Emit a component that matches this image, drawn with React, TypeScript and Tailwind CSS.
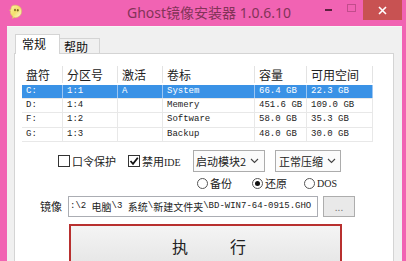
import React from "react";

const cols = [41, 55, 45, 92, 52, 66];
const headers = ["盘符", "分区号", "激活", "卷标", "容量", "可用空间"];
const rows = [
  { c: ["C:", "1:1", "A", "System", "66.4 GB", "22.3 GB"], sel: true, h: 14 },
  { c: ["D:", "1:4", "", "Memery", "451.6 GB", "109.0 GB"], sel: false, h: 14 },
  { c: ["F:", "1:2", "", "Software", "58.0 GB", "35.3 GB"], sel: false, h: 15 },
  { c: ["G:", "1:3", "", "Backup", "48.0 GB", "30.0 GB"], sel: false, h: 14 },
];

const pathParts: { t: string; cjk: boolean }[] = [
  { t: ":\\2 ", cjk: false },
  { t: "电脑", cjk: true },
  { t: "\\3 ", cjk: false },
  { t: "系统", cjk: true },
  { t: "\\", cjk: false },
  { t: "新建文件夹", cjk: true },
  { t: "\\BD-WIN7-64-0915.GHO", cjk: false },
];

function Chevron() {
  return (
    <svg width="9" height="6" viewBox="0 0 9 6" className="shrink-0">
      <path d="M1 1 L4.5 4.5 L8 1" fill="none" stroke="#444" strokeWidth="1.1" />
    </svg>
  );
}

function GhostIcon() {
  return (
    <svg width="14" height="15" viewBox="0 0 14 15">
      <defs>
        <linearGradient id="gg" x1="0" y1="0" x2="1" y2="1">
          <stop offset="0" stopColor="#fff6b0" />
          <stop offset="0.5" stopColor="#f3e06a" />
          <stop offset="1" stopColor="#fffbe6" />
        </linearGradient>
      </defs>
      <path
        d="M3 2 C5 0.5 9 1 11 3 C13 5 13 9 11.5 11 C10 13 7 14 5 13.5 L3.5 14.5 L3.8 12.5 C2 11 1 9 1.5 7 L0.5 6 L2 5.6 C2 4 2.3 2.8 3 2 Z"
        fill="url(#gg)"
        stroke="#d7c35a"
        strokeWidth="0.6"
      />
      <ellipse cx="6" cy="6" rx="0.9" ry="1.2" fill="#7a6a20" />
      <ellipse cx="8.8" cy="6.3" rx="0.9" ry="1.2" fill="#7a6a20" />
    </svg>
  );
}

export default function App() {
  return (
    <div className="w-[406px] h-[261px] overflow-hidden bg-[#f163b3] flex flex-col font-['Noto_Sans_CJK_SC',sans-serif]">
      {/* Title bar */}
      <div className="h-[26px] shrink-0 flex items-start">
        <div className="ml-[9px] mt-[4px]">
          <GhostIcon />
        </div>
        <div className="ml-[104px] leading-[26px] text-[14px] text-[#833358] font-['Noto_Sans','Noto_Sans_CJK_SC',sans-serif] whitespace-nowrap">
          Ghost镜像安装器 1.0.6.10
        </div>
        <div className="ml-auto mt-[9px] w-[7px] h-[2px] bg-[#5b2140]" />
        <div className="ml-[15px] mt-[4px] w-[9px] h-[8px] border border-[#c24c8c]" />
        <div className="ml-[7px] w-[39px] h-[20px] bg-[#c85252] flex items-center justify-center mr-[4px]">
          <svg width="9" height="9" viewBox="0 0 9 9">
            <path d="M1 1 L8 8 M8 1 L1 8" stroke="#ffffff" strokeWidth="1.6" />
          </svg>
        </div>
      </div>

      {/* Body */}
      <div className="flex flex-1 min-h-0">
        <div className="w-[7px] shrink-0" />
        <div className="flex-1 bg-[#f0f0f0] pl-[7px] pr-[8px] pt-[7px] flex flex-col min-w-0 border-t border-[#f7f7f7]">
          {/* Tabs */}
          <div className="h-[19px] shrink-0 flex items-end pl-[1px]">
            <div className="relative z-10 -mb-px w-[45px] h-[20px] bg-white border border-b-0 border-[#d4d4d4] pl-[6px] text-[12px] leading-[18px] text-[#111]">
              常规
            </div>
            <div className="w-[40px] h-[15px] bg-[#f0f0f0] border border-l-0 border-b-0 border-[#d4d4d4] pl-[4px] text-[12px] leading-[15px] text-[#111]">
              帮助
            </div>
          </div>

          {/* Panel */}
          <div className="flex-1 bg-white border border-[#d4d4d4] flex flex-col">
            {/* List */}
            <div className="ml-[7px] mt-[5px] w-[351px] flex flex-col">
              <div className="h-[26px] flex items-end pb-[2px]">
                {headers.map((h, i) => (
                  <div
                    key={h}
                    style={{ width: cols[i] }}
                    className="h-[17px] flex items-center pl-[4px] border-r border-[#e3e3e3] text-[12px] text-[#222] whitespace-nowrap"
                  >
                    {h}
                  </div>
                ))}
              </div>
              {rows.map((r, ri) => (
                <div
                  key={ri}
                  style={{ height: r.h }}
                  className={
                    r.sel
                      ? "flex bg-[#3a92e6] border-b border-[#e8e8e8]"
                      : "flex border-b border-[#e8e8e8]"
                  }
                >
                  {r.c.map((t, i) => (
                    <div
                      key={i}
                      style={{ width: cols[i] }}
                      className={
                        r.sel
                          ? "flex items-center pl-[4px] border-r border-[#9cc6f2] text-[9px] text-white font-['Liberation_Mono',monospace] whitespace-pre"
                          : "flex items-center pl-[4px] border-r border-[#e8e8e8] text-[9px] text-[#222] font-['Liberation_Mono',monospace] whitespace-pre"
                      }
                    >
                      {t}
                    </div>
                  ))}
                </div>
              ))}
            </div>

            {/* Options row */}
            <div className="mt-[8px] h-[22px] flex items-center pl-[43px]">
              <div className="w-[12px] h-[12px] border border-[#333] bg-white shrink-0" />
              <div className="ml-[2px] w-[56px] text-[11px] text-[#222] whitespace-nowrap">口令保护</div>
              <div className="w-[12px] h-[12px] border border-[#333] bg-white shrink-0 flex items-center justify-center">
                <svg width="10" height="10" viewBox="0 0 10 10">
                  <path d="M1.5 5 L4 7.8 L8.8 1.8" fill="none" stroke="#111" strokeWidth="1.8" />
                </svg>
              </div>
              <div className="ml-[2px] w-[51px] text-[11px] text-[#222] whitespace-nowrap">
                禁用<span className="font-['Liberation_Serif',serif] text-[10px]">IDE</span>
              </div>
              <div className="w-[72px] h-[22px] border border-[#acacac] bg-[#fbfbfb] flex items-center justify-between pl-[2px] pr-[5px] shrink-0">
                <span className="text-[11px] text-[#222] whitespace-nowrap">启动模块2</span>
                <Chevron />
              </div>
              <div className="ml-[10px] w-[66px] h-[22px] border border-[#acacac] bg-[#fbfbfb] flex items-center justify-between pl-[3px] pr-[4px] shrink-0">
                <span className="text-[11px] text-[#222] whitespace-nowrap">正常压缩</span>
                <Chevron />
              </div>
            </div>

            {/* Radio row */}
            <div className="mt-[5px] h-[12px] flex items-center pl-[182px]">
              <div className="w-[11px] h-[11px] rounded-full border border-[#555] bg-white shrink-0" />
              <div className="ml-[2px] w-[42px] text-[11px] text-[#222] whitespace-nowrap">备份</div>
              <div className="w-[11px] h-[11px] rounded-full border border-[#555] bg-white shrink-0 flex items-center justify-center">
                <div className="w-[5px] h-[5px] rounded-full bg-[#111]" />
              </div>
              <div className="ml-[2px] w-[39px] text-[11px] text-[#222] whitespace-nowrap">还原</div>
              <div className="w-[11px] h-[11px] rounded-full border border-[#555] bg-white shrink-0" />
              <div className="ml-[2px] text-[10px] text-[#222] whitespace-nowrap font-['Liberation_Serif',serif]">DOS</div>
            </div>

            {/* Image row */}
            <div className="mt-[7px] h-[21px] flex items-center pl-[25px]">
              <div className="w-[28px] text-[11px] text-[#222] whitespace-nowrap">镜像</div>
              <div className="w-[250px] h-[21px] border border-[#abadb3] bg-white flex items-center pl-[1px] overflow-hidden shrink-0 whitespace-pre text-[#222]">
                {pathParts.map((p, i) =>
                  p.cjk ? (
                    <span key={i} className="text-[10px] leading-none">
                      {p.t}
                    </span>
                  ) : (
                    <span key={i} className="text-[9px] leading-none font-['Liberation_Mono',monospace]">
                      {p.t}
                    </span>
                  )
                )}
              </div>
              <div className="ml-[5px] w-[32px] h-[21px] border border-[#adadad] bg-[#e9e9e9] flex items-center justify-center text-[10px] text-[#777] shrink-0">
                ...
              </div>
            </div>

            {/* Execute button */}
            <div className="mt-[7px] ml-[54px] w-[273px] h-[48px] border-2 border-[#b8302f] bg-gradient-to-b from-[#f4f4f4] to-[#e4e4e4] flex justify-center gap-[42px] pl-[7px] pt-[12px] shrink-0">
              <span className="text-[16px] leading-none text-[#222]">执</span>
              <span className="text-[16px] leading-none text-[#222]">行</span>
            </div>
          </div>
        </div>
        <div className="w-[4px] shrink-0" />
      </div>
    </div>
  );
}
